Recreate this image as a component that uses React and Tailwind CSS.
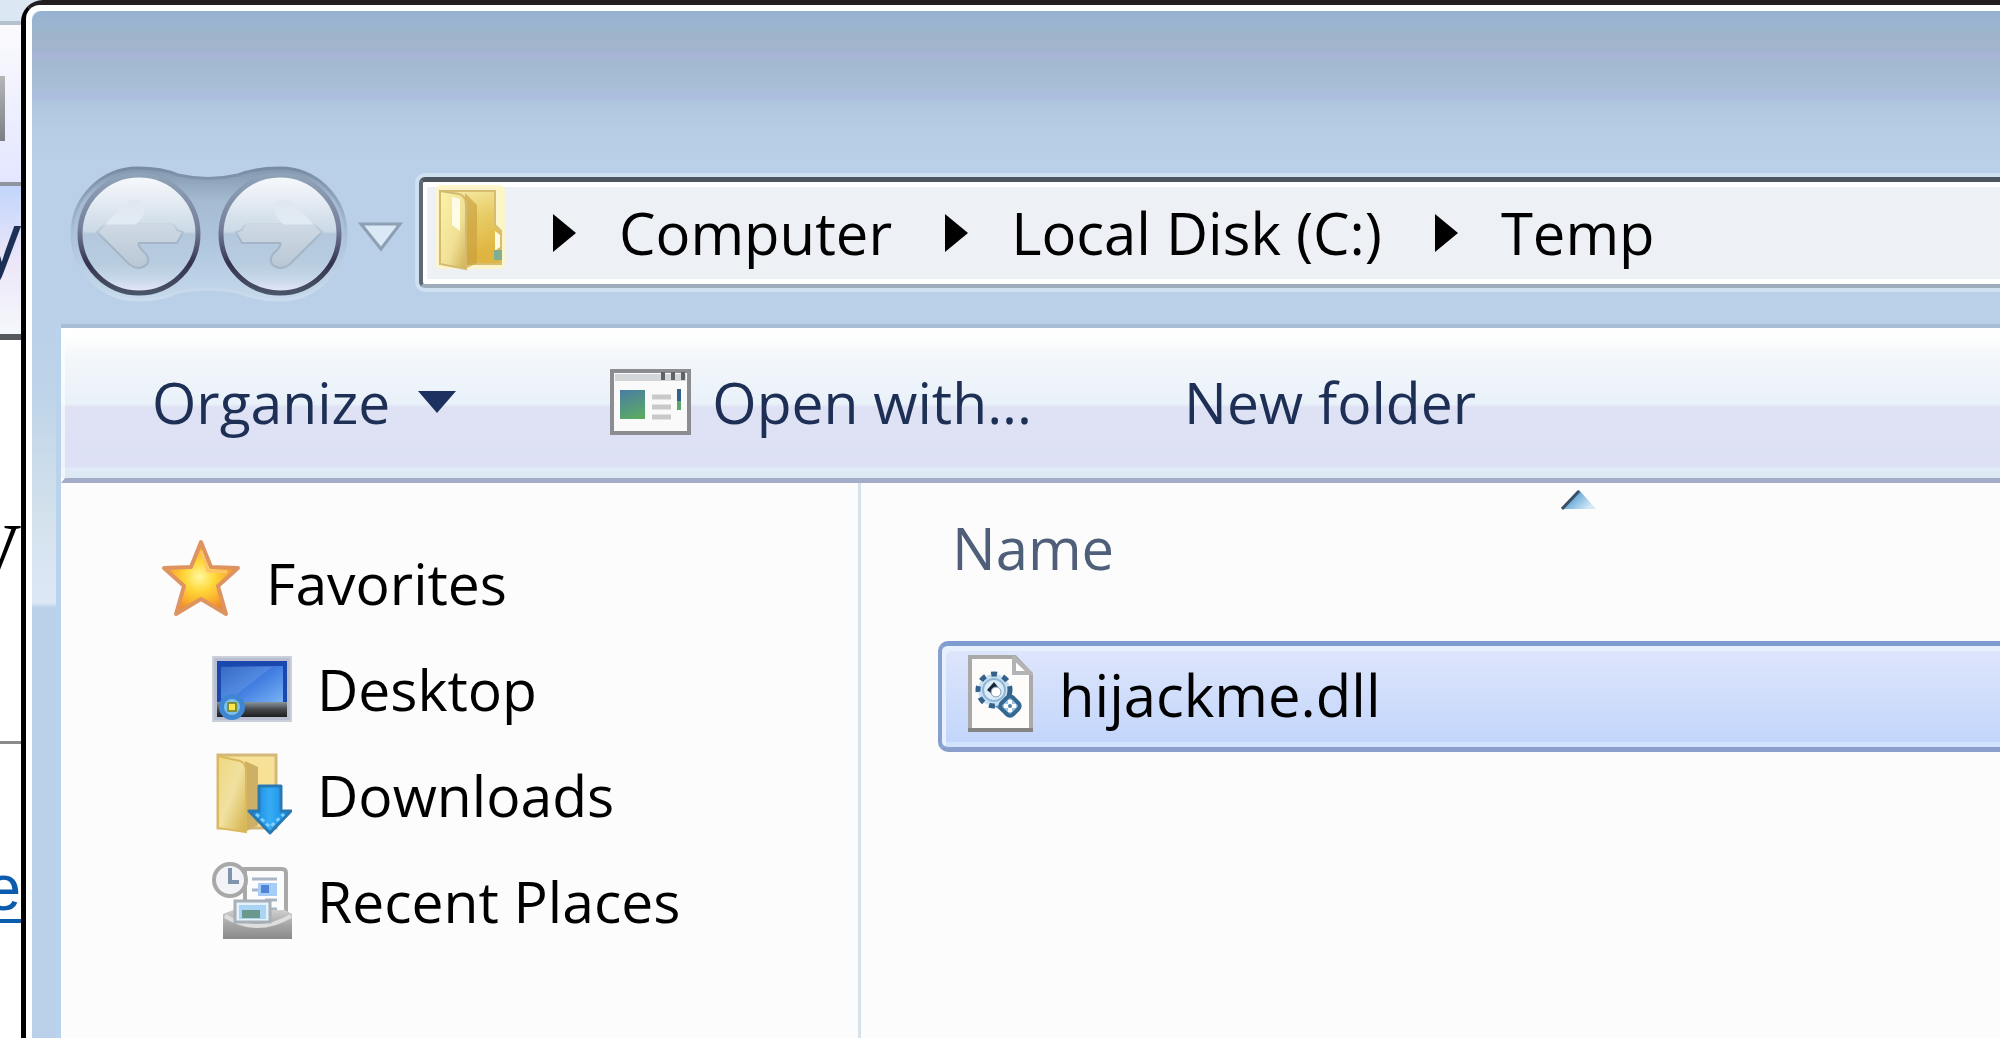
import React from "react";

const LABEL = "text-[57px] leading-[76px] whitespace-nowrap";
const LABEL_LG = "text-[58px] leading-[76px] whitespace-nowrap";

function FolderIcon({ className }) {
  return (
    <svg className={className} viewBox="0 0 70 88" aria-hidden="true">
      <defs>
        <linearGradient id="fFront" x1="0" x2="1" y1="0" y2="1">
          <stop offset="0" stopColor="#fbf4a8" />
          <stop offset="0.6" stopColor="#f0e096" />
          <stop offset="1" stopColor="#d0b055" />
        </linearGradient>
        <linearGradient id="fBack" x1="0" x2="0.3" y1="0" y2="1">
          <stop offset="0" stopColor="#f8efae" />
          <stop offset="0.5" stopColor="#e8cc66" />
          <stop offset="1" stopColor="#dfb440" />
        </linearGradient>
      </defs>
      <rect x="0" y="0" width="70" height="84" rx="6" fill="#fff6bf" opacity="0.8" />
      <path d="M5 6H60V40L66 46V79H5Z" fill="url(#fBack)" stroke="#d6bd70" strokeWidth="2" />
      <path d="M30 8L42 20V78L30 84Z" fill="#c99e3c" opacity="0.65" />
      <path d="M5 6L24 9Q31 11 31 20V84L5 79Z" fill="url(#fFront)" stroke="#d2bb70" strokeWidth="2" />
      <path d="M17 12L25 14V46L17 40Z" fill="#fffef0" opacity="0.9" />
      <path d="M60 46L65 50V62L60 66Z" fill="#fffbe0" />
      <rect x="59" y="65" width="8" height="10" fill="#7fae92" />
    </svg>
  );
}

function DownloadsIcon() {
  return (
    <svg className="h-[84px] w-[80px]" viewBox="0 0 80 84" aria-hidden="true">
      <defs>
        <linearGradient id="dArrow" x1="0" x2="1" y1="0" y2="0">
          <stop offset="0" stopColor="#0d7fd6" />
          <stop offset="0.5" stopColor="#37acf5" />
          <stop offset="1" stopColor="#0c86de" />
        </linearGradient>
        <linearGradient id="dFront" x1="0" x2="1" y1="0" y2="1">
          <stop offset="0" stopColor="#eed77f" />
          <stop offset="0.5" stopColor="#f0e1a0" />
          <stop offset="1" stopColor="#d4b04a" />
        </linearGradient>
      </defs>
      <path d="M6 2H64V75H6Z" fill="#f6e196" stroke="#d3b878" strokeWidth="3" />
      <path d="M33 8L46 14V72L33 79Z" fill="#cdb066" />
      <path d="M6 3L28 8Q34 10 34 18V79L6 75Z" fill="url(#dFront)" stroke="#d9b95c" strokeWidth="2" />
      <path
        d="M47 33H69V58H79L58 80L37 58H47Z"
        fill="url(#dArrow)"
        stroke="#2a78b4"
        strokeWidth="3"
        strokeLinejoin="round"
      />
      <path d="M44 61L58 74L72 61" fill="none" stroke="#7fd0ff" strokeWidth="3" strokeDasharray="4 3" />
    </svg>
  );
}

function StarIcon() {
  return (
    <svg className="h-[88px] w-[80px]" viewBox="0 0 80 88" aria-hidden="true">
      <defs>
        <radialGradient id="star" cx="0.48" cy="0.48" r="0.5">
          <stop offset="0" stopColor="#fff9a0" />
          <stop offset="0.4" stopColor="#ffd83a" />
          <stop offset="0.75" stopColor="#fbae2c" />
          <stop offset="1" stopColor="#ee8a2a" />
        </radialGradient>
      </defs>
      <path
        d="M40 3L50 28L77 29L57 47L65 75L40 60L15 75L23 47L3 29L30 28Z"
        fill="url(#star)"
        stroke="#dd9460"
        strokeWidth="4"
        strokeLinejoin="round"
      />
      <path d="M40 12L47 32L66 33" fill="none" stroke="#ffc46a" strokeWidth="3" />
    </svg>
  );
}

function DesktopIcon() {
  return (
    <svg className="h-[66px] w-[80px]" viewBox="0 0 80 66" aria-hidden="true">
      <defs>
        <linearGradient id="screen" x1="0" x2="1" y1="0" y2="1">
          <stop offset="0" stopColor="#1c4cb0" />
          <stop offset="0.5" stopColor="#4480e2" />
          <stop offset="1" stopColor="#7fb8f8" />
        </linearGradient>
        <linearGradient id="taskbar" x1="0" x2="0" y1="0" y2="1">
          <stop offset="0" stopColor="#8a949c" />
          <stop offset="0.5" stopColor="#44464a" />
          <stop offset="1" stopColor="#1d1e20" />
        </linearGradient>
      </defs>
      <rect x="1" y="1" width="78" height="64" fill="#b9bfd0" stroke="#ccd0da" strokeWidth="2" />
      <rect x="5" y="5" width="70" height="56" fill="#1a48ae" />
      <rect x="9" y="10" width="62" height="41" fill="url(#screen)" />
      <path d="M9 11H60L20 42H9Z" fill="#7fb0ee" opacity="0.3" />
      <rect x="5" y="46" width="70" height="15" fill="url(#taskbar)" />
      <circle cx="20" cy="51" r="13" fill="#3f86d2" />
      <circle cx="20" cy="51" r="8" fill="#7cc0ea" />
      <rect x="15" y="46" width="10" height="10" fill="#7f8f3a" />
      <rect x="17" y="48" width="6" height="6" fill="#ffe94a" />
    </svg>
  );
}

function RecentIcon() {
  return (
    <svg className="h-[78px] w-[82px]" viewBox="0 0 82 78" aria-hidden="true">
      <defs>
        <linearGradient id="tray" x1="0" x2="0" y1="0" y2="1">
          <stop offset="0" stopColor="#cfcfcf" />
          <stop offset="0.5" stopColor="#a6a6a6" />
          <stop offset="1" stopColor="#8a8a8a" />
        </linearGradient>
      </defs>
      <path d="M34 7H71Q75 7 75 11V60H34Z" fill="#fcfcfc" stroke="#a9a9a9" strokeWidth="4" />
      <path d="M41 17H66M41 28H66M54 38H66M60 47H66" stroke="#a9b6c8" strokeWidth="3" />
      <rect x="47" y="21" width="19" height="13" fill="#a5cdf8" />
      <rect x="50" y="23" width="8" height="8" fill="#4f84d8" />
      <path d="M12 52L22 48H74L81 52V77H12Z" fill="url(#tray)" />
      <path d="M14 54Q46 74 80 54" fill="none" stroke="#dedede" strokeWidth="4" />
      <rect x="24" y="39" width="35" height="21" fill="#e6f2fb" stroke="#a7b0b8" strokeWidth="3" />
      <rect x="28" y="43" width="27" height="14" fill="#a9d4f4" />
      <rect x="31" y="48" width="18" height="8" fill="#6b978c" />
      <circle cx="19" cy="18" r="16" fill="#f1f3f6" stroke="#a8a8a8" strokeWidth="4" />
      <path d="M19 6V20H28" fill="none" stroke="#7f93ab" strokeWidth="4" />
    </svg>
  );
}

function DllIcon() {
  return (
    <svg className="h-[80px] w-[66px]" viewBox="0 0 66 80" aria-hidden="true">
      <path d="M3 2H48L64 19V75H3Z" fill="#fdfcfb" stroke="#a9a9a9" strokeWidth="4" />
      <path d="M1 75H66" stroke="#858585" strokeWidth="4" />
      <path d="M47 3V18H63Z" fill="#fff" stroke="#b4b4b4" strokeWidth="4" />
      <path d="M38 36L54 50L42 62L26 50Z" fill="#5f91ba" />
      <circle cx="27" cy="35" r="16" fill="#c8e0f2" stroke="#34618a" strokeWidth="5" strokeDasharray="6 6" />
      <circle cx="27" cy="35" r="11" fill="#dcedf9" stroke="#8fb8d8" strokeWidth="2" />
      <path d="M20 35L27 27L31 32L25 39Z" fill="#16263a" />
      <circle cx="29" cy="37" r="5" fill="#fff" stroke="#7d97ad" strokeWidth="1" />
      <rect x="35" y="43" width="16" height="16" rx="4" transform="rotate(45 43 51)" fill="#9cc4e4" stroke="#34688f" strokeWidth="4" />
      <path d="M37 51H49M43 45V57" stroke="#fff" strokeWidth="4" />
      <circle cx="43" cy="51" r="2" fill="#4b82ad" />
    </svg>
  );
}

function AppIcon() {
  return (
    <svg className="h-[66px] w-[82px]" viewBox="0 0 82 66" aria-hidden="true">
      <defs>
        <linearGradient id="pane" x1="0.2" x2="0.5" y1="0" y2="1">
          <stop offset="0" stopColor="#4a7fa0" />
          <stop offset="1" stopColor="#5ba866" />
        </linearGradient>
      </defs>
      <rect x="2" y="2" width="77" height="62" fill="#fafafa" stroke="#8b8d90" strokeWidth="4" />
      <rect x="5" y="5" width="71" height="7" fill="#d4d7da" />
      <path d="M53 3V11M63 3V11M73 3V11" stroke="#5f6367" strokeWidth="4" />
      <rect x="10" y="21" width="25" height="29" fill="url(#pane)" />
      <path d="M42 28H61M42 38H61M42 48H61" stroke="#c9c9c9" strokeWidth="5" />
      <path d="M69 20V32" stroke="#34618a" strokeWidth="4" />
      <path d="M69 32V41" stroke="#5fa36d" strokeWidth="4" />
    </svg>
  );
}

function NavArrow({ flip, label }) {
  return (
    <button aria-label={label} className="h-[124px] w-[124px] rounded-full">
      <svg viewBox="0 0 124 124" className="h-full w-full" aria-hidden="true">
        <defs>
          <linearGradient id="orb" x1="0" x2="0" y1="0" y2="1">
            <stop offset="0" stopColor="#f8fafc" />
            <stop offset="0.25" stopColor="#e2e9f1" />
            <stop offset="0.48" stopColor="#cbd9e6" />
            <stop offset="0.5" stopColor="#b3c8dc" />
            <stop offset="0.75" stopColor="#b7ccdf" />
            <stop offset="0.88" stopColor="#c6d8ea" />
            <stop offset="1" stopColor="#eae8fa" />
          </linearGradient>
          <linearGradient id="ring" x1="0" x2="0" y1="0" y2="1">
            <stop offset="0" stopColor="#8fa3b8" />
            <stop offset="0.45" stopColor="#76809c" />
            <stop offset="0.75" stopColor="#35334f" />
            <stop offset="1" stopColor="#4a5468" />
          </linearGradient>
          <linearGradient id="arrow" x1="0" x2="0" y1="0" y2="1">
            <stop offset="0" stopColor="#dfe8f1" />
            <stop offset="0.35" stopColor="#e2ebf4" />
            <stop offset="0.38" stopColor="#ced9e4" />
            <stop offset="1" stopColor="#b9c6d4" />
          </linearGradient>
          <linearGradient id="edge" x1="0" x2="0" y1="0" y2="1">
            <stop offset="0.3" stopColor="#a3b5c7" stopOpacity="0" />
            <stop offset="0.6" stopColor="#a3b5c7" />
          </linearGradient>
        </defs>
        <circle cx="62" cy="62" r="59" fill="url(#orb)" stroke="url(#ring)" strokeWidth="5" />
        <g transform={flip ? "translate(124 0) scale(-1 1)" : undefined}>
          <path
            d="M50 30Q60 24 68 32Q70 40 60 52H94Q98 52 100 58L106 60L100 71H62Q60 73 66 79Q74 86 70 92Q62 100 52 92L20 60Z"
            fill="url(#arrow)"
            stroke="url(#edge)"
            strokeWidth="2"
          />
        </g>
      </svg>
    </button>
  );
}

function Crumb({ children }) {
  return (
    <li className="flex items-center">
      <svg className="mr-[43px] h-[38px] w-[23px]" viewBox="0 0 23 38" aria-hidden="true">
        <path d="M0 0L23 19L0 38Z" fill="#000" />
      </svg>
      <a href="#" className={`${LABEL_LG} mr-[53px] text-black`}>
        {children}
      </a>
    </li>
  );
}

function Place({ icon, children, nested }) {
  return (
    <li>
      <a href="#" className={`flex h-[106px] items-center text-black ${nested ? "pl-[150px]" : "pl-[99px]"}`}>
        <span className="mr-6 flex w-[82px] shrink-0 justify-center">{icon}</span>
        <span className={LABEL}>{children}</span>
      </a>
    </li>
  );
}

function PageBehind() {
  return (
    <div className="flex w-[21px] shrink-0 flex-col overflow-hidden bg-white" aria-hidden="true">
      <div className="h-[25px] shrink-0 border-b-4 border-[#b5c3d0] bg-[#dbe7f2]" />
      <div className="h-[161px] shrink-0 border-b-4 border-[#8e959e] bg-linear-to-b from-[#fbfbfd] to-[#e3e6ff] pt-[51px]">
        <div className="h-[65px] w-[5px] bg-linear-to-b from-[#b4b6b8] to-[#7c8085]" />
      </div>
      <div className="flex h-[154px] shrink-0 justify-end border-b-6 border-[#55585c] bg-linear-to-b from-[#c2d5fc] via-[#ece6f8] to-[#f5f8fc] text-[78px] leading-[104px] text-[#1c2f55]">
        y
      </div>
      <div className="flex h-[404px] shrink-0 justify-end border-b-3 border-[#8a8a8a] pt-[150px] font-['Liberation_Serif'] text-[94px] leading-[94px] text-black">
        <span>y</span>
      </div>
      <div className="flex flex-1 justify-end pt-[112px] font-['Liberation_Sans'] text-[64px] leading-none text-[#0b5cad]">
        <span className="h-[67px] border-b-4 border-[#0b5cad]">e</span>
      </div>
    </div>
  );
}

export default function App() {
  return (
    <div className="flex h-screen overflow-hidden bg-[#dbe7f2] font-['Open_Sans','Noto_Sans',sans-serif]">
      <PageBehind />
      <div className="flex min-w-0 flex-1 flex-col rounded-tl-[22px] border-t-5 border-l-5 border-t-[#231f20] border-l-black bg-white">
        <div className="flex min-h-0 flex-1 flex-col rounded-tl-[14px] border-t-6 border-l-6 border-white bg-[#b9d0e8]">
          <header className="flex items-center rounded-tl-[10px] bg-[linear-gradient(to_bottom,#96b1d0_0px,#9cb5d0_16px,#9fb4ca_24px,#a1b4cc_38px,#a7b4d8_44px,#a3b9d0_52px,#a9bfd7_78px,#adbde0_86px,#b0c6df_92px,#b7cde5_120px,#b9d0e8_150px)] pt-[151px] pb-[22px] pl-[34px]">
            <div className="relative flex h-[140px] w-[284px] shrink-0 items-center pt-1 pl-[11px]">
              <svg className="absolute inset-0 h-full w-full" viewBox="0 0 284 140" aria-hidden="true">
                <defs>
                  <linearGradient id="cradle" x1="0" x2="0" y1="0" y2="1">
                    <stop offset="0" stopColor="#8398ae" />
                    <stop offset="0.25" stopColor="#a5bbd1" />
                    <stop offset="0.6" stopColor="#b0c7df" />
                    <stop offset="1" stopColor="#c6d9ec" />
                  </linearGradient>
                  <linearGradient id="rim" x1="0" x2="0" y1="0" y2="1">
                    <stop offset="0" stopColor="#778ca2" />
                    <stop offset="0.5" stopColor="#abc1d7" />
                    <stop offset="1" stopColor="#cbdcee" />
                  </linearGradient>
                </defs>
                <path
                  d="M72 6Q96 6 112 13Q142 20 172 13Q190 6 214 6A66 66 0 0 1 214 138Q190 138 172 130Q142 124 112 130Q96 138 72 138A66 66 0 0 1 72 6Z"
                  fill="url(#cradle)"
                  stroke="url(#rim)"
                  strokeWidth="3"
                />
              </svg>
              <span className="relative flex gap-[17px]">
                <NavArrow label="Back" />
                <NavArrow label="Forward" flip />
              </span>
            </div>
            <button aria-label="Recent pages" className="ml-2 shrink-0">
              <svg className="h-[42px] w-[45px]" viewBox="0 0 45 42" aria-hidden="true">
                <path d="M3 13H42L23 38Z" fill="#dbe8f5" stroke="#8c9fb3" strokeWidth="3" />
              </svg>
            </button>
            <nav
              aria-label="Address"
              className="ml-[16px] flex h-[111px] min-w-0 flex-1 items-center overflow-hidden rounded-l-[6px] border-t-5 border-b-4 border-l-4 border-t-[#4d565f] border-b-[#9dabba] border-l-[#5d6874] bg-[#edf0f5] pl-[12px] shadow-[inset_4px_5px_0_#fff,inset_0_-5px_0_#fff,0_0_0_4px_#cfe0f0]"
            >
              <FolderIcon className="mr-[48px] mb-2 h-[88px] w-[70px] shrink-0" />
              <ol className="flex">
                <Crumb>Computer</Crumb>
                <Crumb>Local Disk (C:)</Crumb>
                <Crumb>Temp</Crumb>
              </ol>
            </nav>
          </header>

          <div className="flex min-h-0 flex-1">
            <div className="w-[24px] shrink-0 bg-[linear-gradient(to_bottom,#b9d0e8_0px,#bfd4e9_70px,#d2e0ec_180px,#dbe7f4_260px,#dbe7f4_279px,#b9d0e8_284px)]" />
            <div className="w-[5px] shrink-0 bg-[#b9d3ec]" />
            <main className="flex min-w-0 flex-1 flex-col border-t-4 border-[#a6bdd6] bg-[#fcfcfc]">
              <div
                role="toolbar"
                className="flex h-[155px] shrink-0 items-center border-b-5 border-l-4 border-b-[#a3acc9] border-l-white/60 bg-[linear-gradient(to_bottom,#ffffff_0px,#fdfefe_10px,#f3f7fb_30px,#e9f1f9_76px,#dfe2f5_79px,#dde1f5_138px,#e0ecf8_141px,#dbe6f0_150px)] pb-[2px] pl-[87px] text-[#1e2f55]"
              >
                <button className={`${LABEL} flex items-center`}>
                  Organize
                  <svg className="ml-[28px] h-[22px] w-[38px]" viewBox="0 0 38 22" aria-hidden="true">
                    <path d="M0 0H38L19 22Z" fill="#1c3160" />
                  </svg>
                </button>
                <button className={`${LABEL} ml-[154px] flex items-center gap-[20px]`}>
                  <AppIcon />
                  Open with...
                </button>
                <button className={`${LABEL} ml-[152px]`}>New folder</button>
              </div>

              <div className="flex min-h-0 flex-1">
                <aside className="w-[800px] shrink-0 border-r-3 border-[#d7e3ec] pt-[47px]">
                  <ul>
                    <Place icon={<StarIcon />}>Favorites</Place>
                    <Place nested icon={<DesktopIcon />}>Desktop</Place>
                    <Place nested icon={<DownloadsIcon />}>Downloads</Place>
                    <Place nested icon={<RecentIcon />}>Recent Places</Place>
                  </ul>
                </aside>
                <section className="min-w-0 flex-1 pl-[77px]">
                  <table className="w-full border-collapse">
                    <thead>
                      <tr>
                        <th scope="col" className="relative h-[158px] p-0 text-left align-top font-normal">
                          <button className={`${LABEL_LG} mt-[27px] ml-[14px] text-[#4f5f79]`}>Name</button>
                          <svg
                            className="absolute top-[6px] left-[623px] h-[21px] w-[36px]"
                            viewBox="0 0 36 21"
                            aria-hidden="true"
                          >
                            <defs>
                              <linearGradient id="sort" x1="0" x2="1" y1="0" y2="0.6">
                                <stop offset="0.2" stopColor="#3c5f80" />
                                <stop offset="0.5" stopColor="#7ab4dc" />
                                <stop offset="1" stopColor="#d5eaf7" />
                              </linearGradient>
                            </defs>
                            <path d="M18 1L35 20H1Z" fill="url(#sort)" />
                            <path d="M1 20L18 2" stroke="#3a4f66" strokeWidth="3" />
                          </svg>
                        </th>
                      </tr>
                    </thead>
                    <tbody>
                      <tr>
                        <td className="p-0">
                          <div className="flex h-[111px] items-center gap-[26px] rounded-l-[10px] border-y-5 border-l-4 border-t-[#7d9dd0] border-b-[#8b9fcc] border-l-[#86a0d0] bg-linear-to-b from-[#dfe6fb] to-[#c1d5fb] pb-[4px] pl-[25px] shadow-[inset_4px_5px_0_#e6f1fd,inset_0_-5px_0_#d0e2fc]">
                            <DllIcon />
                            <span className={`${LABEL_LG} text-black`}>hijackme.dll</span>
                          </div>
                        </td>
                      </tr>
                    </tbody>
                  </table>
                </section>
              </div>
            </main>
          </div>
        </div>
      </div>
    </div>
  );
}
